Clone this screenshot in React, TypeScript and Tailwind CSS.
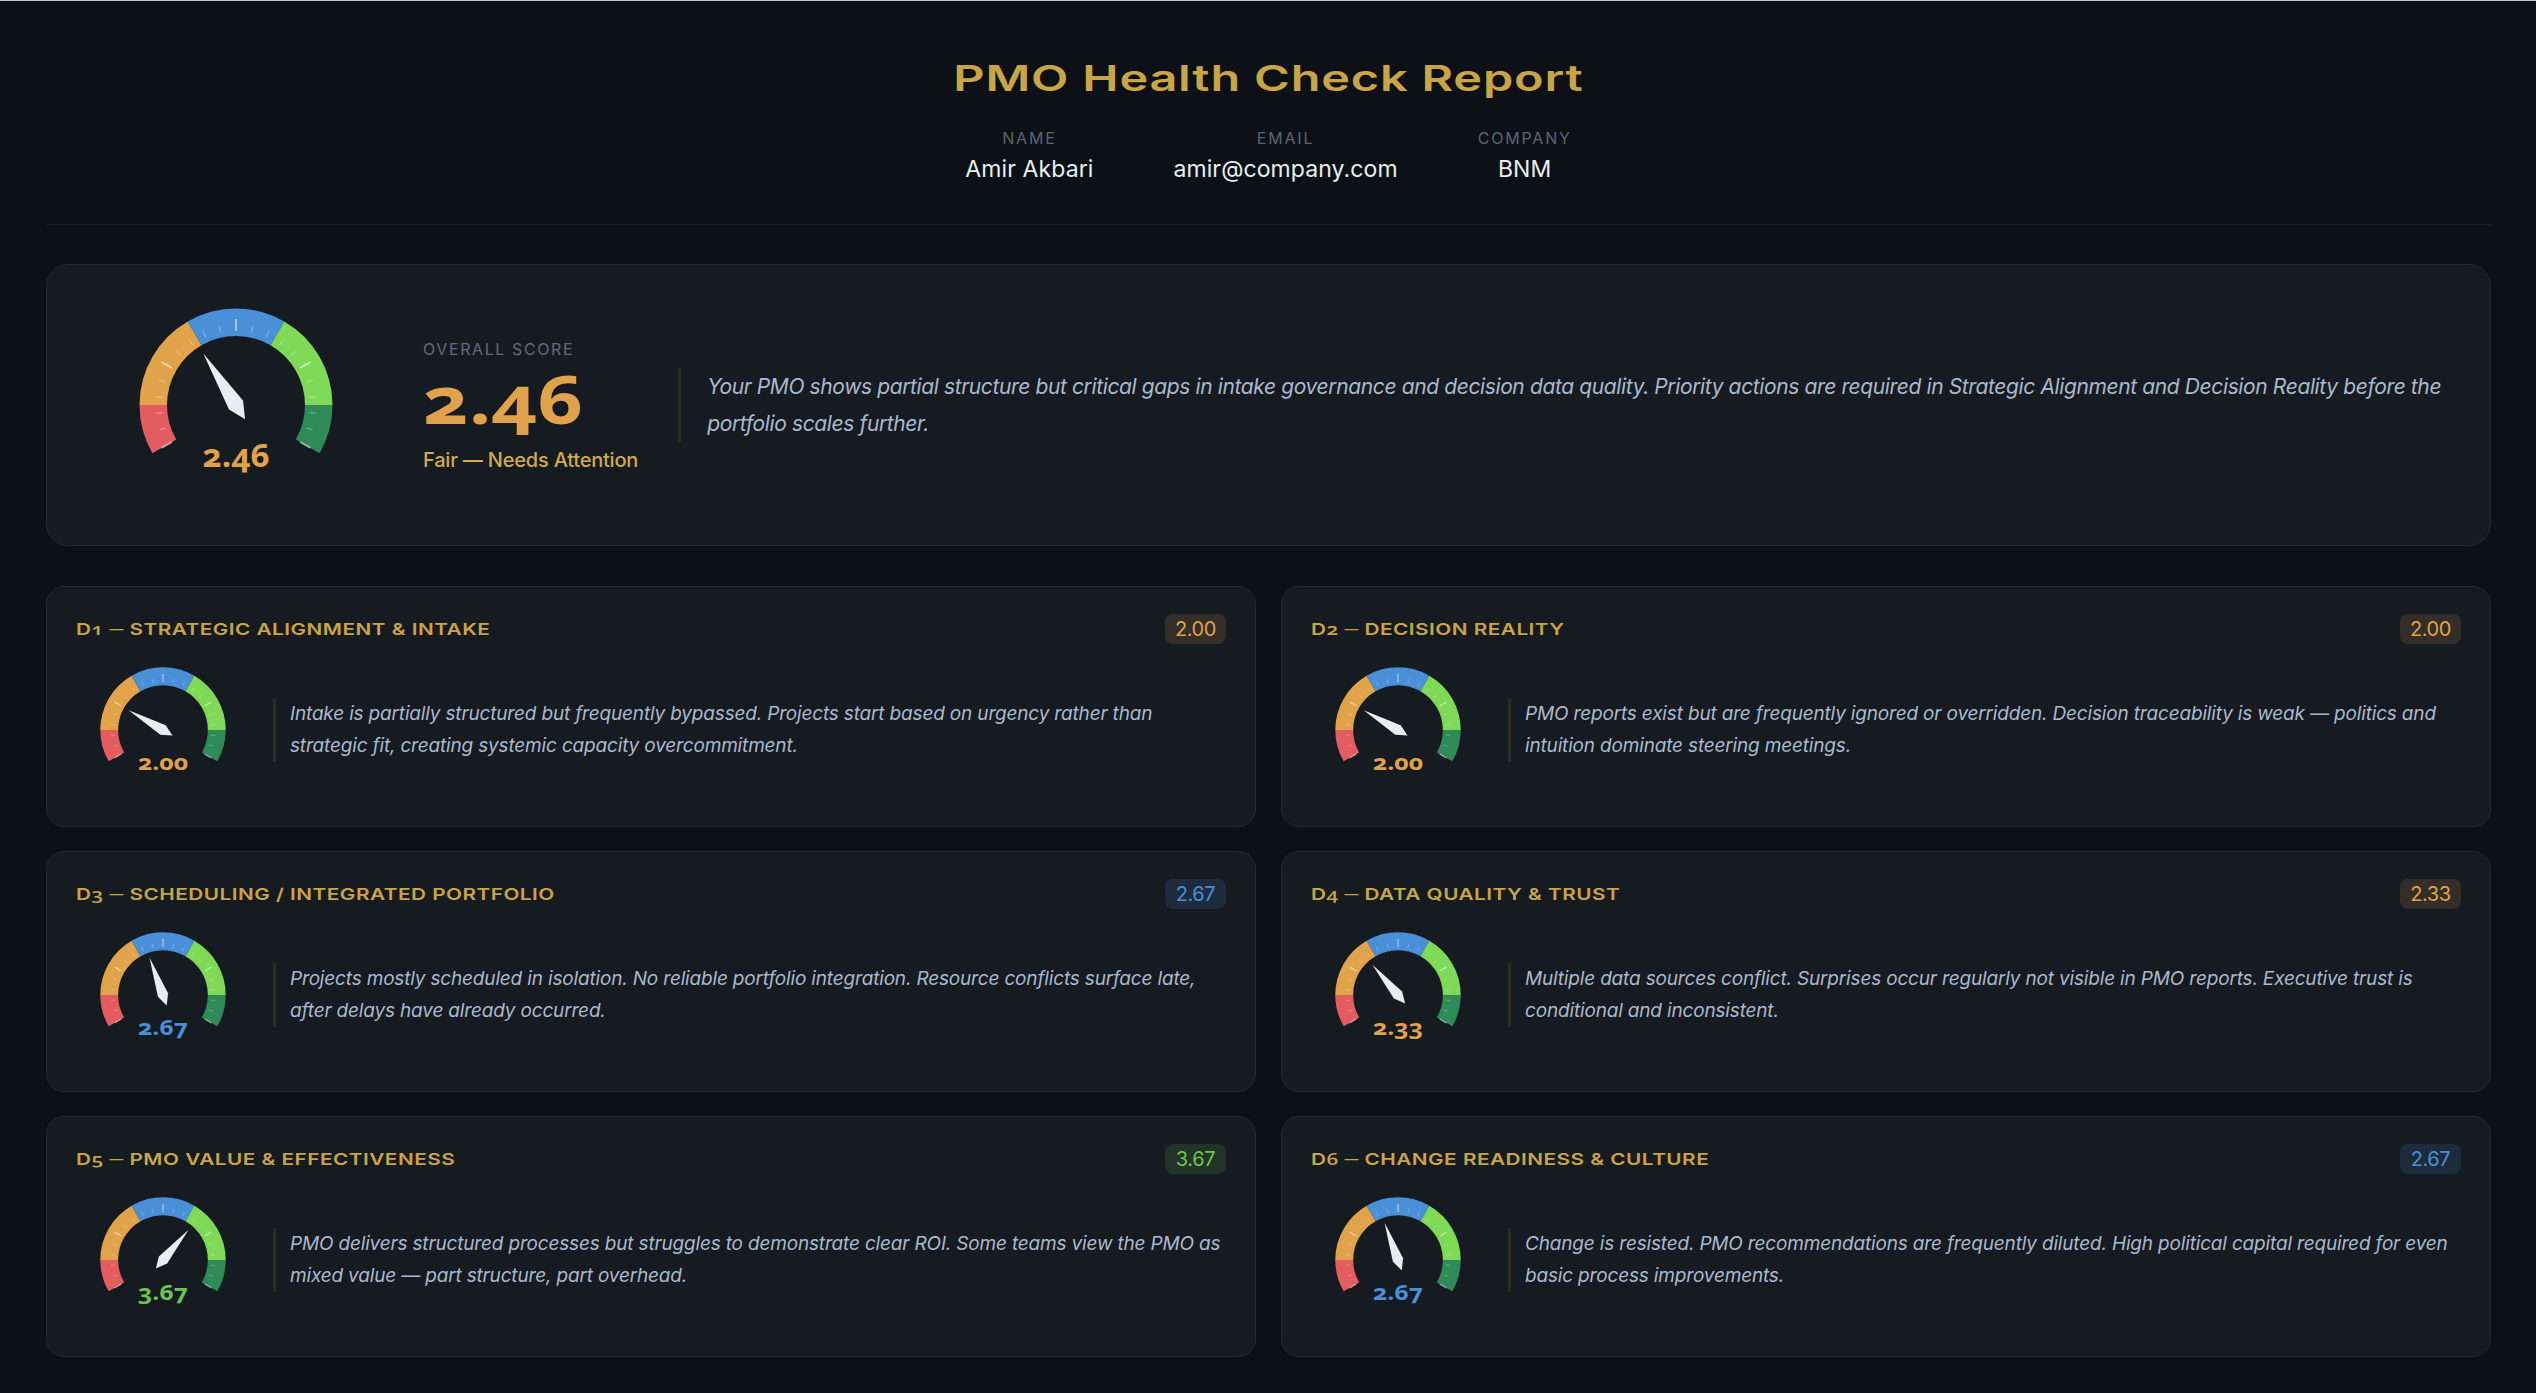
import React from "react";

const ORANGE = "#e0a24a";
const BLUE = "#4a90d9";
const GREEN = "#6cc64e";

const polar = (r: number, deg: number, c = 100): [number, number] => {
  const a = (deg * Math.PI) / 180;
  return [c + r * Math.cos(a), c - r * Math.sin(a)];
};

const arc = (a0: number, a1: number, ro = 96.5, ri = 69) => {
  const [x0, y0] = polar(ro, a0);
  const [x1, y1] = polar(ro, a1);
  const [x2, y2] = polar(ri, a1);
  const [x3, y3] = polar(ri, a0);
  return `M${x0} ${y0}A${ro} ${ro} 0 0 1 ${x1} ${y1}L${x2} ${y2}A${ri} ${ri} 0 0 0 ${x3} ${y3}Z`;
};

const segments: [number, number, string][] = [
  [210, 180, "#e25c60"],
  [180, 120, "#e0a34a"],
  [120, 60, "#4a90d9"],
  [60, 0, "#7ed957"],
  [0, -30, "#2e8b57"],
];

function Gauge({
  score,
  color,
  px,
  size,
  len,
}: {
  score: number;
  color: string;
  px: number;
  size: number;
  len: number;
}) {
  const ticks: number[] = [];
  for (let a = 210; a >= -30; a -= 12) ticks.push(a);
  const angle = 270 - 60 * score;
  return (
    <svg width={px} height={px} viewBox="0 0 200 200" className="shrink-0">
      {segments.map(([a, b, c]) => (
        <path key={a} d={arc(a, b)} fill={c} />
      ))}
      {ticks.map((a) => {
        const major = (210 - a) % 60 === 0;
        const [x0, y0] = polar(74, a);
        const [x1, y1] = polar(major ? 86 : 80.5, a);
        return (
          <line
            key={a}
            x1={x0}
            y1={y0}
            x2={x1}
            y2={y1}
            stroke="#ffffff"
            strokeOpacity={major ? 0.55 : 0.3}
            strokeWidth={major ? 1.8 : 1.3}
          />
        );
      })}
      <polygon
        points="100,39 108.3,100 100,117 91.7,100"
        fill="#e8edf3"
        transform={`rotate(${90 - angle} 100 100)`}
      />
      <text
        x="100"
        y="161.5"
        textAnchor="middle"
        fontFamily="'Open Sans', sans-serif"
        fontWeight="700"
        fontSize={size}
        textLength={len}
        lengthAdjust="spacingAndGlyphs"
        fill={color}
        className="[font-variant-numeric:oldstyle-nums]"
      >
        {score.toFixed(2)}
      </text>
    </svg>
  );
}

const cards = [
  {
    code: "1",
    title: "STRATEGIC ALIGNMENT & INTAKE",
    score: 2.0,
    color: ORANGE,
    badge: "bg-[#e0a24a]/15 text-[#e0a24a]",
    text: "Intake is partially structured but frequently bypassed. Projects start based on urgency rather than strategic fit, creating systemic capacity overcommitment.",
  },
  {
    code: "2",
    title: "DECISION REALITY",
    score: 2.0,
    color: ORANGE,
    badge: "bg-[#e0a24a]/15 text-[#e0a24a]",
    text: "PMO reports exist but are frequently ignored or overridden. Decision traceability is weak — politics and intuition dominate steering meetings.",
  },
  {
    code: "3",
    title: "SCHEDULING / INTEGRATED PORTFOLIO",
    score: 2.67,
    color: BLUE,
    badge: "bg-[#4a90d9]/15 text-[#4a90d9]",
    text: "Projects mostly scheduled in isolation. No reliable portfolio integration. Resource conflicts surface late, after delays have already occurred.",
  },
  {
    code: "4",
    title: "DATA QUALITY & TRUST",
    score: 2.33,
    color: ORANGE,
    badge: "bg-[#e0a24a]/15 text-[#e0a24a]",
    text: "Multiple data sources conflict. Surprises occur regularly not visible in PMO reports. Executive trust is conditional and inconsistent.",
  },
  {
    code: "5",
    title: "PMO VALUE & EFFECTIVENESS",
    score: 3.67,
    color: GREEN,
    badge: "bg-[#6cc64e]/15 text-[#6cc64e]",
    text: "PMO delivers structured processes but struggles to demonstrate clear ROI. Some teams view the PMO as mixed value — part structure, part overhead.",
  },
  {
    code: "6",
    title: "CHANGE READINESS & CULTURE",
    score: 2.67,
    color: BLUE,
    badge: "bg-[#4a90d9]/15 text-[#4a90d9]",
    text: "Change is resisted. PMO recommendations are frequently diluted. High political capital required for even basic process improvements.",
  },
];

const meta = [
  ["NAME", "Amir Akbari"],
  ["EMAIL", "amir@company.com"],
  ["COMPANY", "BNM"],
];

export default function App() {
  return (
    <div className="min-h-[1393px] bg-[#0d1117] font-['Inter',sans-serif]">
      <div className="h-px bg-[#c4c7cb]" />
      <div className="pr-[45px] pl-[46px]">
        <header className="flex flex-col items-center border-b border-[#1c2129] pt-[49px] pb-[40px]">
          <h1 className="inline-block h-[56px] origin-center scale-x-[1.35] text-[36px] leading-[56px] font-semibold tracking-[0.6px] text-[#c9a545]">
            PMO Health Check Report
          </h1>
          <div className="mt-[22px] flex justify-center gap-[80px]">
            {meta.map(([k, v]) => (
              <div key={k} className="flex flex-col items-center">
                <div className="text-[16px] leading-[20px] tracking-[1.8px] text-[#5c6472]">{k}</div>
                <div className="mt-[6px] text-[23px] leading-[30px] tracking-[0.1px] text-[#eaeef3]">{v}</div>
              </div>
            ))}
          </div>
        </header>

        <section className="mt-[39px] flex h-[282px] items-center rounded-[22px] border border-[#252a33] bg-[#161b22] pr-[46px] pl-[89px]">
          <Gauge score={2.46} color={ORANGE} px={200} size={32} len={67} />
          <div className="ml-[87px] flex shrink-0 flex-col pt-[3px]">
            <div className="text-[16px] leading-[20px] tracking-[1.6px] text-[#636b79]">OVERALL SCORE</div>
            <div className="mt-[16px] h-[60px] origin-left scale-x-[1.2] font-['Open_Sans',sans-serif] text-[66px] leading-[47px] font-bold text-[#e0a24a] [font-variant-numeric:oldstyle-nums]">2.46</div>
            <div className="mt-[11px] text-[20px] leading-[28px] font-medium tracking-[-0.2px] text-[#d6a94a]">Fair — Needs Attention</div>
          </div>
          <p className="ml-[40px] flex-1 border-l-[3px] border-[#2d2b23] pl-[26px] text-[21px] leading-[37px] tracking-[-0.38px] text-[#a9b9cd] italic">
            Your PMO shows partial structure but critical gaps in intake governance and decision data quality. Priority actions are required in Strategic Alignment and Decision Reality before the portfolio scales further.
          </p>
        </section>

        <section className="mt-[40px] grid grid-cols-2 gap-x-[25px] gap-y-[24px] pb-[38px]">
          {cards.map((c) => (
            <div key={c.code} className="rounded-[18px] border border-[#252a33] bg-[#161b22] pt-[27px] pr-[29px] pb-[31px] pl-[29px]">
              <div className="flex h-[30px] items-center justify-between">
                <div className="origin-left scale-x-[1.257] text-[16.5px] font-semibold tracking-[0.4px] text-[#c9a545]">
                  D
                  <span className="font-['Open_Sans',sans-serif] [font-variant-numeric:oldstyle-nums]">{c.code}</span>{" "}
                  <span className="align-[2px] text-[11px]">—</span> {c.title}
                </div>
                <div className={`flex h-[30px] w-[61px] items-center justify-center rounded-[8px] text-[20px] tracking-[-0.4px] ${c.badge}`}>
                  {c.score.toFixed(2)}
                </div>
              </div>
              <div className="mt-[21px] flex items-center">
                <div className="ml-[22px]">
                  <Gauge score={c.score} color={c.color} px={130} size={34} len={77} />
                </div>
                <p className="ml-[45px] flex-1 border-l-[3px] border-[#2d2b23] pl-[14px] text-[19px] leading-[32px] tracking-[-0.17px] text-[#a9b9cd] italic">
                  {c.text}
                </p>
              </div>
            </div>
          ))}
        </section>
      </div>
    </div>
  );
}
